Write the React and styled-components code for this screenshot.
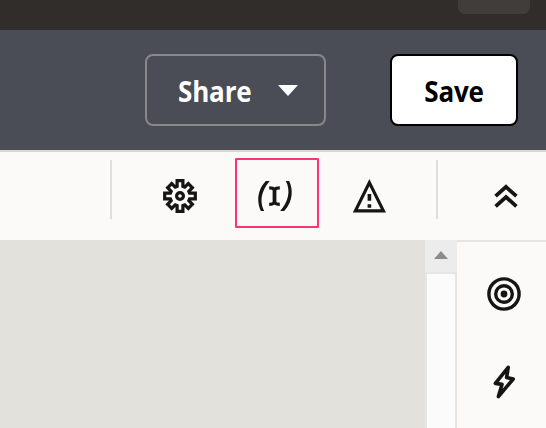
import React from "react";
import styled, { createGlobalStyle } from "styled-components";

const GlobalStyle = createGlobalStyle`
  * { box-sizing: border-box; }
  body { margin: 0; overflow: hidden; font-family: "Open Sans", "Noto Sans", sans-serif; }
  button { font: inherit; cursor: pointer; padding: 0; }
  svg { display: block; flex: none; }
`;

const Page = styled.div`
  width: 546px;
  height: 428px;
  display: flex;
  flex-direction: column;
  background: #fbfaf8;
  overflow: hidden;
`;

const TopBar = styled.header`
  height: 30px;
  flex: none;
  display: flex;
  justify-content: flex-end;
  padding-right: 16px;
  background: #312d2a;
`;

const TopTab = styled.div`
  width: 72px;
  height: 14px;
  border-radius: 0 0 7px 7px;
  background: #413d3a;
`;

const Header = styled.div`
  height: 122px;
  flex: none;
  display: flex;
  justify-content: flex-end;
  gap: 64px;
  padding: 24px 28px 0 0;
  background: #4a4d55;
  border-bottom: 2px solid #d9d8c6;
`;

const Button = styled.button`
  width: ${(p) => p.$width}px;
  height: 72px;
  display: flex;
  align-items: center;
  justify-content: ${(p) => (p.$menu ? "space-between" : "center")};
  padding: ${(p) => (p.$menu ? "0 26px 0 31px" : "0")};
  border: 2px solid ${(p) => (p.$primary ? "#000" : "#88888a")};
  border-radius: 8px;
  background: ${(p) => (p.$primary ? "#fff" : "transparent")};
  color: ${(p) => (p.$primary ? "#000" : "#fff")};
`;

const Label = styled.span`
  font-size: 28px;
  font-weight: 700;
  line-height: 40px;
  letter-spacing: -0.2px;
  padding-top: 2px;
  transform: scaleX(0.93);
  transform-origin: ${(p) => (p.$start ? "left" : "center")};
`;

const Toolbar = styled.div`
  height: 88px;
  flex: none;
  display: flex;
  padding: 6px 0 0 110px;
`;

const Divider = styled.div`
  width: 2px;
  height: 59px;
  flex: none;
  margin-top: 2px;
  background: #e0dfdc;
`;

const Tool = styled.button`
  width: ${(p) => p.$width || 84}px;
  height: 70px;
  flex: none;
  margin-left: ${(p) => p.$before || 0}px;
  margin-right: ${(p) => p.$after || 0}px;
  display: flex;
  align-items: center;
  justify-content: center;
  padding-top: 6px;
  border: 2px solid ${(p) => (p.$active ? "#fb3575" : "transparent")};
  border-radius: 1px;
  background: transparent;
`;

const Workspace = styled.main`
  flex: 1;
  display: grid;
  grid-template-columns: 425px 32px 89px;
`;

const Canvas = styled.div`
  background: #e3e1dc;
`;

const Scrollbar = styled.div`
  display: flex;
  flex-direction: column;
  background: #fbfbfb;
`;

const ScrollUp = styled.div`
  height: 32px;
  display: flex;
  align-items: center;
  justify-content: center;
  padding-bottom: 2px;
  background: #ececec;
`;

const Track = styled.div`
  flex: 1;
  border: 2px solid #e6e6e6;
  border-bottom: 0;
`;

const SidePanel = styled.aside`
  display: flex;
  flex-direction: column;
  align-items: center;
  gap: 48px;
  padding: 32px 0 0 5px;
  border-top: 2px solid #e6e5e2;
`;

const toothPoints = Array.from({ length: 8 }, (_, i) => {
  const a = (i * Math.PI) / 4;
  const tip = i % 2 ? -14.6 : -15.3;
  return [[-2.9, -9.6], [-2.9, tip], [2.9, tip], [2.9, -9.6]]
    .map(([x, y]) =>
      `${(x * Math.cos(a) - y * Math.sin(a)).toFixed(2)},${(x * Math.sin(a) + y * Math.cos(a)).toFixed(2)}`)
    .join(" ");
}).join(" ");

const ink = "#161513";

const GearIcon = () => (
  <svg width="40" height="40" viewBox="-20 -20 40 40" fill="none" stroke={ink} strokeWidth="3.2">
    <polygon points={toothPoints} />
    <circle r="3.4" />
  </svg>
);

const bracket = "M8.8 5H12.8C5 14 1.8 25 7.2 35H3.8C0 27 -0.5 15 8.8 5Z";

const VariableIcon = () => (
  <svg width="40" height="40" viewBox="0 0 40 40" fill="none" stroke={ink}>
    <path d={bracket} fill={ink} stroke="none" />
    <path d={bracket} fill={ink} stroke="none" transform="rotate(180 18 20)" />
    <path d="M12.2 11.8C14.8 11.8 16.6 12.4 17.5 13.6C18.4 12.4 20.2 11.8 22.8 11.8M12.2 28.4C14.8 28.4 16.6 27.8 17.5 26.6C18.4 27.8 20.2 28.4 22.8 28.4" strokeWidth="3.2" />
    <path d="M17.5 13V27.5" strokeWidth="3.8" />
  </svg>
);

const WarningIcon = () => (
  <svg width="40" height="40" viewBox="0 0 40 40">
    <path d="M20.4 6.6L34.4 34.9H6.4Z" fill="none" stroke={ink} strokeWidth="3.2" />
    <path d="M18.6 18h3.6v6.8h-3.6zM18.6 28.2h3.6v3.5h-3.6z" fill={ink} />
  </svg>
);

const CollapseIcon = () => (
  <svg width="40" height="40" viewBox="0 0 40 40" fill="none" stroke={ink} strokeWidth="3.8">
    <path d="M9.6 20.2L20 10.9L30.4 20.2M9.6 30.3L20 21L30.4 30.3" />
  </svg>
);

const TargetIcon = () => (
  <svg width="40" height="40" viewBox="-20 -20 40 40" fill="none" stroke={ink} strokeWidth="3.4">
    <circle r="15.1" />
    <circle r="8.3" />
    <circle r="3.4" fill={ink} stroke="none" />
  </svg>
);

const BoltIcon = () => (
  <svg width="40" height="40" viewBox="0 0 40 40" fill="none" stroke={ink} strokeWidth="3.6" strokeLinejoin="round">
    <path d="M24.2 5.4L11.4 21.4L18 22.4L14.4 34.6L29.2 17L22.6 15.6Z" />
  </svg>
);

const CaretDown = () => (
  <svg width="20" height="11" viewBox="0 0 20 11">
    <path d="M0 0H20L10 11Z" fill="#fff" />
  </svg>
);

const CaretUp = () => (
  <svg width="14" height="8" viewBox="0 0 14 8">
    <path d="M0 8H14L7 0Z" fill="#8b8b8b" />
  </svg>
);

export default function App() {
  return (
    <>
      <GlobalStyle />
      <Page>
        <TopBar><TopTab /></TopBar>
        <Header>
          <Button $width={181} $menu><Label $start>Share</Label><CaretDown /></Button>
          <Button $width={128} $primary><Label>Save</Label></Button>
        </Header>
        <Toolbar>
          <Divider />
          <Tool $before={26} $after={13} aria-label="Settings"><GearIcon /></Tool>
          <Tool $active aria-label="Variables"><VariableIcon /></Tool>
          <Tool $before={8} $after={25} aria-label="Issues"><WarningIcon /></Tool>
          <Divider />
          <Tool $width={56} $before={40} aria-label="Collapse"><CollapseIcon /></Tool>
        </Toolbar>
        <Workspace>
          <Canvas />
          <Scrollbar>
            <ScrollUp><CaretUp /></ScrollUp>
            <Track />
          </Scrollbar>
          <SidePanel><TargetIcon /><BoltIcon /></SidePanel>
        </Workspace>
      </Page>
    </>
  );
}
